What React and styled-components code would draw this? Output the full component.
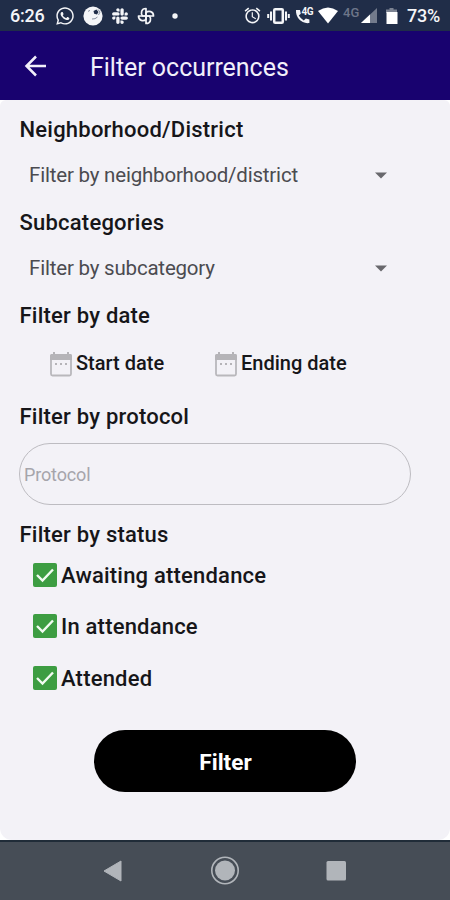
import styled, { createGlobalStyle } from "styled-components";
import { FaSlack, FaWhatsapp } from "react-icons/fa";
import { MdAlarm } from "react-icons/md";

const GlobalStyle = createGlobalStyle`
  * {
    box-sizing: border-box;
  }
  body {
    margin: 0;
    background-color: #ffffff;
    font-family: Roboto, "Liberation Sans", sans-serif;
  }
`;

const Screen = styled.div`
  display: flex;
  flex-direction: column;
  width: 450px;
  height: 900px;
  overflow: hidden;
  background-color: #ffffff;
`;

const StatusBar = styled.div`
  display: flex;
  align-items: center;
  justify-content: space-between;
  height: 31px;
  padding: 0 10px;
  background-color: #202d48;
  color: #f4f5f8;
`;

const StatusGroup = styled.div`
  display: flex;
  align-items: center;
  gap: ${(props) => props.$gap}px;

  svg {
    display: block;
    flex: none;
  }
`;

const StatusText = styled.span`
  width: ${(props) => props.$width}px;
  font-size: 18px;
  font-weight: 500;
  line-height: 31px;
  letter-spacing: -0.2px;
  white-space: nowrap;
`;

const Network = styled.span`
  display: flex;
  align-items: center;
  height: 18px;
`;

const NetworkLabel = styled.span`
  width: 18px;
  margin-bottom: 6px;
  color: #6d7588;
  font-size: 13px;
  font-weight: 500;
  line-height: 12px;
`;

const CallIcon = styled.span`
  position: relative;
  width: 18px;
  height: 18px;
`;

const CallBadge = styled.span`
  position: absolute;
  top: 0;
  right: 0;
  font-size: 10px;
  font-weight: 700;
  line-height: 9px;
  letter-spacing: -0.5px;
`;

const AppBar = styled.header`
  display: flex;
  align-items: center;
  height: 69px;
  padding: 0 21px;
  background-color: #18026f;
  color: #f1effa;
`;

const BackButton = styled.button`
  display: flex;
  width: 30px;
  margin: 0 39px 0 0;
  padding: 0;
  border: none;
  background: none;
  color: inherit;
`;

const AppTitle = styled.h1`
  margin: 4px 0 0;
  font-size: 25px;
  font-weight: 400;
  line-height: 30px;
  letter-spacing: -0.03px;
`;

const Content = styled.main`
  display: flex;
  flex-direction: column;
  flex: 1;
  padding: 15px 39px 0 19px;
  border-radius: 6px 6px 12px 12px;
  background-color: #f3f2f7;
  color: #161619;
`;

const Heading = styled.h2`
  margin: 0;
  padding-left: 0.5px;
  font-size: 22px;
  font-weight: 500;
  line-height: 30px;
  letter-spacing: 0.22px;
`;

const Select = styled.div`
  display: flex;
  align-items: center;
  justify-content: space-between;
  height: 63px;
  padding: 0 24px 3px 10px;
  color: #4b4b50;
  font-size: 20.5px;
  line-height: 24px;
  letter-spacing: -0.2px;
`;

const SelectText = styled.span`
  margin-bottom: 1px;
`;

const DateRow = styled.div`
  display: flex;
  align-items: center;
  height: 71px;
  padding: 0 0 7px 30px;
`;

const DateField = styled.div`
  display: flex;
  align-items: center;
  width: 165px;
  gap: 3px;
  font-size: 20px;
  font-weight: 500;
  line-height: 26px;
  white-space: nowrap;

  svg {
    flex: none;
    margin-top: 1px;
  }
`;

const ProtocolInput = styled.input`
  flex: none;
  width: 392px;
  height: 62px;
  margin: 11px 0 15px;
  padding: 0 4px;
  border: 1px solid #bdbcc1;
  border-radius: 31px;
  background: transparent;
  font-family: inherit;
  font-size: 18px;
  letter-spacing: -0.15px;

  &::placeholder {
    color: #a6a5ab;
    opacity: 1;
  }
`;

const CheckList = styled.div`
  display: flex;
  flex-direction: column;
  padding-left: 14px;
`;

const CheckRow = styled.div`
  display: flex;
  align-items: center;
  height: 52px;
  gap: 4px;
  font-size: 22px;
  font-weight: 500;
  letter-spacing: 0.2px;

  &:first-child {
    height: 50px;
  }
`;

const CheckBox = styled.span`
  display: flex;
  width: 24px;
  height: 24px;
  border-radius: 2px;
  background-color: #3d9d42;
`;

const FilterButton = styled.button`
  width: 262px;
  height: 62px;
  margin: 26px 0 0 75px;
  padding: 2px 0 0 1px;
  border: none;
  border-radius: 31px;
  background-color: #000000;
  color: #ffffff;
  font-family: inherit;
  font-size: 22.5px;
  font-weight: 700;
`;

const NavBar = styled.nav`
  display: flex;
  align-items: center;
  height: 60px;
  padding: 0 103px;
  justify-content: space-between;
  border-top: 2px solid #202c38;
  background-color: #464d56;
`;

const BackArrow = () => (
  <svg width="30" height="30" viewBox="0 0 30 30">
    <path d="M25 15H6M15 5.5L5.5 15l9.5 9.5" fill="none" stroke="currentColor" strokeWidth="2.5" />
  </svg>
);

const BallIcon = () => (
  <svg width="20" height="20" viewBox="0 0 20 20">
    <circle cx="10" cy="10" r="9.6" fill="#f4f5f8" />
    <path d="M10.5 5l3-1.5 2 2.5-1.5 2.4-2.8-.6z" fill="#202d48" />
    <path d="M15 3.5l2 2.5-1.5 3M5 5.4l2-1M9 13l3-.3 2.5-1.7" stroke="#8a92a2" strokeWidth="1" fill="none" />
  </svg>
);

const PinwheelIcon = () => (
  <svg width="18" height="18" viewBox="0 0 18 18" fill="none" stroke="#f4f5f8" strokeWidth="1.7" strokeLinejoin="round">
    {[0, 90, 180, 270].map((angle) => (
      <path key={angle} d="M9 9V1.5C4 1.5 3.6 6.5 5.5 9z" transform={`rotate(${angle} 9 9)`} />
    ))}
  </svg>
);

const VibrationIcon = () => (
  <svg width="23" height="18" viewBox="0 0 23 18" fill="none" stroke="#f4f5f8">
    <rect x="7.2" y="2.2" width="8.6" height="13.6" rx="1" strokeWidth="2.5" />
    <path d="M4 4.5v9M19 4.5v9M1.2 7v4M21.8 7v4" strokeWidth="2" />
  </svg>
);

const CalendarIcon = () => (
  <svg width="24" height="26" viewBox="0 0 24 26">
    <path d="M5 1v4M19 1v4" stroke="#b5b4b8" strokeWidth="2" />
    <rect x="2" y="4" width="20" height="20.5" rx="1.5" fill="none" stroke="#b9b8bc" strokeWidth="1.8" />
    <path d="M1 4.5Q1 3 2.5 3h19Q23 3 23 4.5V9H1z" fill="#b5b4b8" />
    <path d="M6 13h2M11 13h2M16 13h2" stroke="#b5b4b8" strokeWidth="2" />
  </svg>
);

const CaretIcon = () => (
  <svg width="12" height="7" viewBox="0 0 12 7">
    <path d="M0 .5h12L6 6.5z" fill="#68686d" />
  </svg>
);

const statuses = ["Awaiting attendance", "In attendance", "Attended"];

const App = () => {
  return (
    <Screen>
      <GlobalStyle />
      <StatusBar>
        <StatusGroup $gap={8}>
          <StatusText $width={37}>6:26</StatusText>
          <FaWhatsapp size={20} />
          <BallIcon />
          <FaSlack size={18} />
          <PinwheelIcon />
          <svg width="22" height="6" viewBox="0 0 22 6">
            <circle cx="12" cy="3" r="2.7" fill="#f4f5f8" />
          </svg>
        </StatusGroup>
        <StatusGroup $gap={5}>
          <MdAlarm size={19} />
          <VibrationIcon />
          <CallIcon>
            <svg width="18" height="18" viewBox="0 0 18 18">
              <path d="M1 3h4l.8 3.8L3.8 8.6a14 14 0 0 0 5 5l2-2 3.6.8V16C6.8 17.2.4 10.4 1 3z" fill="#f4f5f8" />
            </svg>
            <CallBadge>4G</CallBadge>
          </CallIcon>
          <svg width="20" height="17" viewBox="0 0 20 17">
            <path d="M0 4Q10-3 20 4L10 16.5z" fill="#ffffff" />
          </svg>
          <Network>
            <NetworkLabel>4G</NetworkLabel>
            <svg width="16" height="15" viewBox="0 0 16 15">
              <path d="M16 0v15H0z" fill="#737b8c" />
              <path d="M9 6.5V15H0z" fill="#ffffff" />
            </svg>
          </Network>
          <svg width="20" height="17" viewBox="0 0 20 17">
            <path d="M7.5 1h4v1.5H15V6H4V2.5h3.5z" fill="#7c8392" />
            <path d="M4.5 5h11v12h-11z" fill="#ffffff" />
          </svg>
          <StatusText $width={33}>73%</StatusText>
        </StatusGroup>
      </StatusBar>
      <AppBar>
        <BackButton aria-label="Back">
          <BackArrow />
        </BackButton>
        <AppTitle>Filter occurrences</AppTitle>
      </AppBar>
      <Content>
        <Heading>Neighborhood/District</Heading>
        <Select>
          <SelectText>Filter by neighborhood/district</SelectText>
          <CaretIcon />
        </Select>
        <Heading>Subcategories</Heading>
        <Select>
          <SelectText>Filter by subcategory</SelectText>
          <CaretIcon />
        </Select>
        <Heading>Filter by date</Heading>
        <DateRow>
          <DateField>
            <CalendarIcon />
            Start date
          </DateField>
          <DateField>
            <CalendarIcon />
            Ending date
          </DateField>
        </DateRow>
        <Heading>Filter by protocol</Heading>
        <ProtocolInput placeholder="Protocol" />
        <Heading>Filter by status</Heading>
        <CheckList>
          {statuses.map((status) => (
            <CheckRow key={status}>
              <CheckBox>
                <svg width="24" height="24" viewBox="0 0 24 24">
                  <path d="M4 12l5.5 5.5L20 6.5" fill="none" stroke="#f2fbf2" strokeWidth="2.4" />
                </svg>
              </CheckBox>
              {status}
            </CheckRow>
          ))}
        </CheckList>
        <FilterButton>Filter</FilterButton>
      </Content>
      <NavBar>
        <svg width="19" height="22" viewBox="0 0 19 22">
          <path d="M18 1v20L1 11z" fill="#b1b5ba" stroke="#b1b5ba" strokeLinejoin="round" />
        </svg>
        <svg width="30" height="30" viewBox="0 0 30 30">
          <circle cx="16" cy="14.5" r="13.2" fill="none" stroke="#b1b5ba" strokeWidth="1.6" />
          <circle cx="16" cy="14.5" r="10" fill="#b1b5ba" />
        </svg>
        <svg width="21" height="20" viewBox="0 0 21 20">
          <rect x="0.5" width="19.5" height="19.5" rx="1.5" fill="#b1b5ba" />
        </svg>
      </NavBar>
    </Screen>
  );
};

export default App;
